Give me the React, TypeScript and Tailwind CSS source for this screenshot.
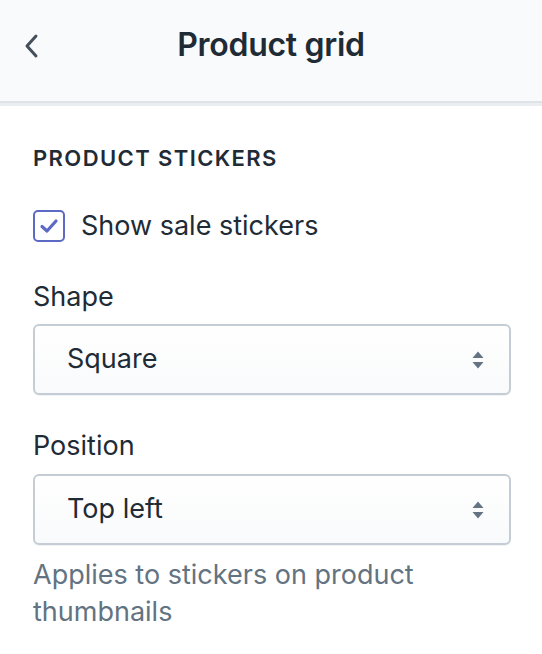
import React from "react";

function Chevrons() {
  return (
    <svg width="12" height="20" viewBox="0 0 12 20" className="shrink-0">
      <path d="M6 1.5 L11.5 8 H0.5 Z" fill="#637381" />
      <path d="M6 18.5 L11.5 12 H0.5 Z" fill="#637381" />
    </svg>
  );
}

function Select({ value }: { value: string }) {
  return (
    <div className="flex h-[71px] items-center justify-between rounded-[6px] border-2 border-[#c4cdd5] bg-gradient-to-b from-white to-[#f9fafb] pl-[32px] pr-[25px] shadow-[0_1px_0_rgba(22,29,37,0.05)]">
      <span className="text-[27px] text-[#212b36]">{value}</span>
      <Chevrons />
    </div>
  );
}

export default function App() {
  return (
    <div
      className="min-h-[654px] w-[542px] bg-white"
      style={{ fontFamily: "Inter, 'Noto Sans', sans-serif" }}
    >
      <div className="relative flex h-[103px] items-center justify-center border-b-2 border-[#dfe3e8] bg-[#f9fafb] pb-[11px] shadow-[0_3px_0_#ebeef1]">
        <svg
          width="20"
          height="28"
          viewBox="0 0 20 28"
          className="absolute left-[22px] top-[32px]"
        >
          <path
            d="M14 4 L5 14 L14 24"
            fill="none"
            stroke="#454f5b"
            strokeWidth="3"
            strokeLinecap="round"
            strokeLinejoin="round"
          />
        </svg>
        <h1 className="text-[32px] font-semibold leading-[40px] tracking-[-0.3px] text-[#212b36]">
          Product grid
        </h1>
      </div>

      <div className="pl-[33px] pr-[31px] pt-[41px]">
        <h2 className="text-[22px] font-semibold uppercase leading-[28px] tracking-[1.4px] text-[#212b36]">
          Product stickers
        </h2>

        <div className="mt-[35px] flex items-center gap-[16px]">
          <div className="flex h-[32px] w-[32px] items-center justify-center rounded-[5px] border-2 border-[#5c6ac4] bg-white">
            <svg width="20" height="16" viewBox="0 0 20 16">
              <path
                d="M3 8.5 L8 13 L17 3"
                fill="none"
                stroke="#5c6ac4"
                strokeWidth="3.2"
                strokeLinecap="round"
                strokeLinejoin="round"
              />
            </svg>
          </div>
          <span className="text-[27px] leading-[38px] text-[#212b36]">
            Show sale stickers
          </span>
        </div>

        <div className="mt-[33px] text-[27px] leading-[38px] text-[#212b36]">Shape</div>
        <div className="mt-[8px]">
          <Select value="Square" />
        </div>

        <div className="mt-[32px] text-[27px] leading-[38px] text-[#212b36]">Position</div>
        <div className="mt-[9px]">
          <Select value="Top left" />
        </div>

        <p className="mt-[11px] text-[27px] leading-[37px] text-[#637381]">
          Applies to stickers on product thumbnails
        </p>
      </div>
    </div>
  );
}
